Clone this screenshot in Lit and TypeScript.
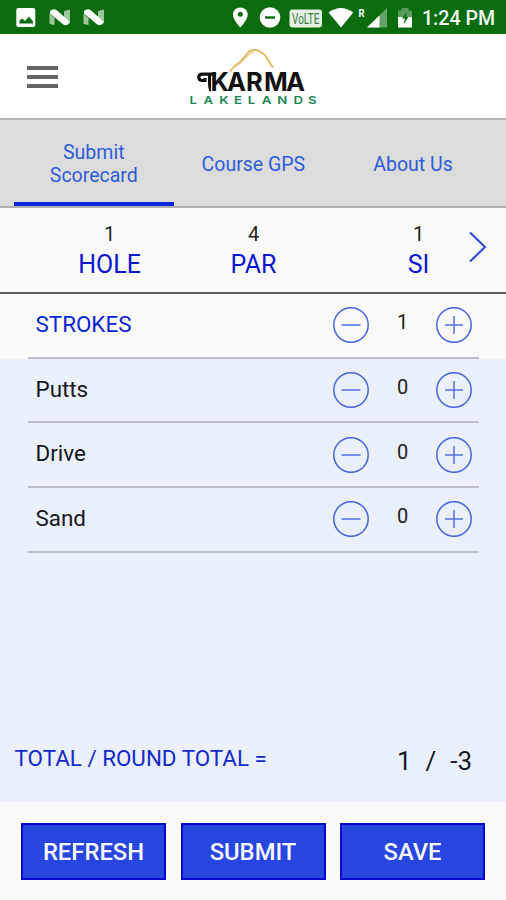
import { LitElement, html, css, svg } from "lit";
import { customElement, property, state } from "lit/decorators.js";
import { classMap } from "lit/directives/class-map.js";

@customElement("status-bar")
class StatusBar extends LitElement {
  static styles = css`
    :host { display: block; height: 34px; background: #0a6c0c; }
    svg { display: block; }
    text { font-family: Roboto, sans-serif; fill: #f4faf4; }
    .volte { fill: #3c7a3e; }
  `;

  private notification(x: number) {
    return svg`<g transform="translate(${x} 9)">
      <path d="M0 4.500 5 9v7l-5-1z M20.500 0.500v14l-6-5V2z" fill="#9cc79d"/>
      <path d="M0.500 2Q3.500-1 7 1L20 12.500q0 2.500-3 3.500-2 0.500-3.500-0.800L0.500 4.500z" fill="#fff"/>
    </g>`;
  }

  render() {
    return html`<svg width="506" height="34" viewBox="0 0 506 34">
      <rect x="16.300" y="8" width="19" height="19" rx="2" fill="#fff"/>
      <path d="M19.500 23.500v-3l2.500-2 3 2.500 4-4.500 4 5v2z" fill="#0a6c0c"/>
      ${this.notification(49.5)} ${this.notification(83.5)}
      <path d="M240.300 7.500c-4.300 0-7.400 3.200-7.400 7.200 0 5 7.400 12.800 7.400 12.800s7.400-7.800 7.400-12.800c0-4-3.100-7.200-7.400-7.200z" fill="#fff"/>
      <circle cx="240.300" cy="14.300" r="2.500" fill="#0a6c0c"/>
      <circle cx="270" cy="17.500" r="10.300" fill="#fff"/>
      <rect x="265" y="16.300" width="10" height="2.400" fill="#0a6c0c"/>
      <rect x="289.500" y="9.500" width="32.500" height="18" rx="3" fill="#e4f2e4"/>
      <text class="volte" x="292" y="24" font-size="14" textLength="27.500" lengthAdjust="spacingAndGlyphs">VoLTE</text>
      <path d="M328.500 12.500Q341 3.500 353.200 12.500L341 27.500z" fill="#fff"/>
      <text x="358.500" y="16.500" font-size="11" font-weight="700" textLength="6" lengthAdjust="spacingAndGlyphs">R</text>
      <path d="M387 8v19.500H367z" fill="#64a466"/>
      <path d="M379.500 15.500v12H367z" fill="#fff"/>
      <path d="M398 10.500h3.500V8h7v2.500h3.500V18h-14z" fill="#5a9c5c"/>
      <path d="M398 17h14v10.500h-14z" fill="#fff"/>
      <path d="M407 11.500l-5 7h3l-1.500 6 5-7.500h-3z" fill="#0a6c0c"/>
      <text x="422" y="25" font-size="20" font-weight="500" textLength="73" lengthAdjust="spacingAndGlyphs">1:24 PM</text>
    </svg>`;
  }
}

@customElement("app-header")
class AppHeader extends LitElement {
  static styles = css`
    :host {
      box-sizing: border-box; height: 86px; background: #fff; border-bottom: 2px solid #b5b5b5;
      display: grid; grid-template-columns: 1fr 140px 1fr; align-items: center;
    }
    .menu { display: flex; flex-direction: column; gap: 5px; width: 31px; margin: 1px 0 0 27px; }
    .bar { height: 4px; background: #666; }
    .logo { display: block; }
    .name { font: 700 25.500px Inter, sans-serif; fill: #111; }
    .place { font: 600 11px Inter, sans-serif; fill: #16864f; }
  `;

  render() {
    return html`
      <div class="menu"><div class="bar"></div><div class="bar"></div><div class="bar"></div></div>
      <svg class="logo" width="140" height="84" viewBox="183 34 140 84">
        <path d="M230 71.500q4-6 10-9.500 5-6 9-10.500 5-3 10-0.500 6 3 8.500 8 3 5 5.500 8.500" fill="none" stroke="#e0b352" stroke-width="1.700"/>
        <path d="M234 67.500q8-5 13-11 4-4.500 7-4" fill="none" stroke="#ebca83" stroke-width="1.200"/>
        <path d="M216 74.200H202.500q-3.700 0-3.700 3 0 3.300 3.700 3.300h2.500v-2.500" fill="none" stroke="#111" stroke-width="3.200"/>
        <path d="M208 75h3v16.300h-1.800q-1.200-4-1.200-8z" fill="#111"/>
        <text class="name" x="210.500 227 246 264 286" y="91.300">KARMA</text>
        <text class="place" transform="translate(189.500 104.300) scale(1.200 1)" x="0 11.700 24.800 37 48.500 60.300 73.200 86.600 98.800" y="0">LAKELANDS</text>
      </svg>
      <div></div>
    `;
  }
}

@customElement("count-row")
class CountRow extends LitElement {
  @property() label = "";
  @property({ type: Number }) value = 0;
  @property({ type: Boolean }) highlight = false;

  static styles = css`
    :host { display: block; padding: 0 27px 0 28px; box-sizing: border-box; height: 64.700px; }
    .row {
      height: 100%; box-sizing: border-box; border-bottom: 2px solid #bbbdc6;
      display: grid; grid-template-columns: 304px 38px 1fr 38px; align-items: center; padding: 0 6px 0 0;
    }
    .label { padding-left: 7.500px; font-size: 22.400px; color: #15171c; line-height: 26px; margin-top: -3px; }
    .highlight { color: #0b24d6; }
    .value { text-align: center; font-size: 20px; color: #222; line-height: 24px; margin-top: -6px; }
    svg { display: block; }
    circle, path { fill: none; stroke: #4463df; stroke-width: 1.500; }
    path { stroke: #5470e0; }
  `;

  private icon(d: string) {
    return html`<svg width="38" height="38" viewBox="0 0 38 38"><circle cx="19" cy="19" r="17.200"/><path d=${d}/></svg>`;
  }

  private step(by: number) {
    this.dispatchEvent(new CustomEvent("step", { detail: by }));
  }

  render() {
    return html`<div class="row">
      <div class=${classMap({ label: true, highlight: this.highlight })}>${this.label}</div>
      <div @click=${() => this.step(-1)}>${this.icon("M9.500 19h19")}</div>
      <div class="value">${this.value}</div>
      <div @click=${() => this.step(1)}>${this.icon("M10 19h18M19 10v18")}</div>
    </div>`;
  }
}

@customElement("app-root")
class AppRoot extends LitElement {
  @state() private counts = [
    { label: "STROKES", value: 1 },
    { label: "Putts", value: 0 },
    { label: "Drive", value: 0 },
    { label: "Sand", value: 0 },
  ];

  static styles = css`
    :host {
      display: flex; flex-direction: column; width: 506px; height: 900px; overflow: hidden;
      font-family: Roboto, sans-serif; background: #fafafa;
    }
    app-header { flex: none; }
    .tabs {
      box-sizing: border-box; height: 88px; background: #dcdcdc; border-bottom: 2px solid #b0b0b0;
      display: grid; grid-template-columns: repeat(3, 159.600px); padding-left: 14px; flex: none;
    }
    .tab {
      display: flex; align-items: center; justify-content: center; text-align: center;
      font-size: 19.500px; line-height: 23px; color: #2c5ddb; border-bottom: 4px solid transparent; padding-top: 6px;
    }
    .active { border-color: #0a28d8; }
    .stats {
      box-sizing: border-box; height: 86px; border-bottom: 2px solid #5c5c5c; flex: none;
      display: grid; grid-template-columns: 70px 79px 65px 79px 86px 79px 48px; padding-top: 14px;
    }
    .stat { text-align: center; }
    .hole { grid-column: 2; }
    .par { grid-column: 4; }
    .si { grid-column: 6; }
    .num { font-size: 20px; line-height: 24px; color: #222; }
    .cap { font-size: 25px; line-height: 30px; margin-top: 4px; color: #0a16cf; }
    .next { grid-column: 7; margin: 8px 0 0 10px; }
    .strokes { flex: none; }
    .panel { background: #ebf0fd; flex: 1; display: flex; flex-direction: column; justify-content: space-between; }
    .total { display: flex; justify-content: space-between; padding: 0 34px 24px 14.500px; }
    .total-label { font-size: 22.400px; line-height: 30px; color: #1329cb; margin-top: -1px; }
    .total-value { font-size: 26px; line-height: 34px; color: #16181f; word-spacing: 7.500px; }
    .actions {
      height: 98px; box-sizing: border-box; flex: none;
      display: grid; grid-template-columns: repeat(3, 145px); gap: 14.500px; padding: 21px 0 0 21px;
    }
    button {
      height: 57px; box-sizing: border-box; border: 2px solid #0909c8; background: #2745df;
      color: #f7f8ff; padding: 0; font: 500 23.800px Roboto, sans-serif;
    }
  `;

  private change(i: number, by: number) {
    this.counts = this.counts.map((c, n) => (n === i ? { ...c, value: Math.max(0, c.value + by) } : c));
  }

  private row(i: number) {
    const c = this.counts[i];
    return html`<count-row .label=${c.label} .value=${c.value} .highlight=${i === 0}
      @step=${(e: CustomEvent) => this.change(i, e.detail)}></count-row>`;
  }

  render() {
    return html`
      <status-bar></status-bar>
      <app-header></app-header>
      <nav class="tabs">
        <div class="tab active">Submit<br />Scorecard</div>
        <div class="tab">Course GPS</div>
        <div class="tab">About Us</div>
      </nav>
      <section class="stats">
        <div class="stat hole"><div class="num">1</div><div class="cap">HOLE</div></div>
        <div class="stat par"><div class="num">4</div><div class="cap">PAR</div></div>
        <div class="stat si"><div class="num">1</div><div class="cap">SI</div></div>
        <svg class="next" width="20" height="34" viewBox="0 0 20 34">
          <path d="M2 2.500 17 17 2 31.500" fill="none" stroke="#2744d8" stroke-width="2" />
        </svg>
      </section>
      <div class="strokes">${this.row(0)}</div>
      <section class="panel">
        <div>${[1, 2, 3].map((i) => this.row(i))}</div>
        <div class="total">
          <div class="total-label">TOTAL / ROUND TOTAL =</div>
          <div class="total-value">1 / -3</div>
        </div>
      </section>
      <footer class="actions">
        <button>REFRESH</button><button>SUBMIT</button><button>SAVE</button>
      </footer>
    `;
  }
}
